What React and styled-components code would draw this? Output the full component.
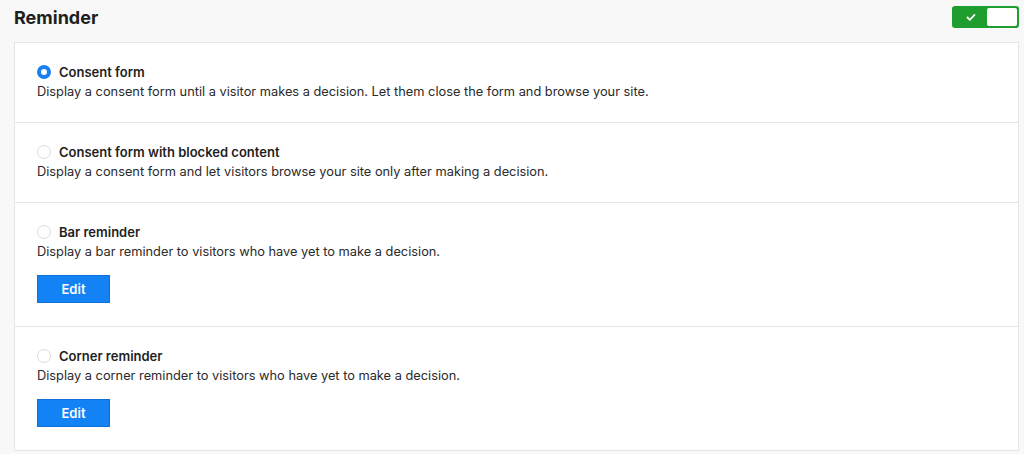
import React, { useState } from 'react'
import styled, { createGlobalStyle } from 'styled-components'

const Global = createGlobalStyle`
  body {
    margin: 0;
    background: #f8f8f8;
    font-family: Inter, "Noto Sans", sans-serif;
    color: #1e1e1e;
  }
`

const Page = styled.div`
  padding: 4px 5px 4px 14px;
`

const Header = styled.div`
  display: flex;
  align-items: center;
  justify-content: space-between;
  height: 26px;
  margin-bottom: 12px;
`

const Title = styled.h2`
  margin: 0;
  font-size: 18px;
  font-weight: 700;
  color: #1e1e1e;
`

const Toggle = styled.button`
  display: flex;
  align-items: stretch;
  width: 67px;
  height: 22px;
  padding: 2px;
  border: none;
  border-radius: 3px;
  background: ${p => (p.$on ? '#1f9e2f' : '#cccccc')};
  cursor: pointer;
  flex-direction: ${p => (p.$on ? 'row' : 'row-reverse')};
`

const ToggleMark = styled.span`
  flex: 1;
  display: flex;
  align-items: center;
  justify-content: center;
`

const Knob = styled.span`
  width: 30px;
  background: #fff;
  border-radius: 2px;
`

const Panel = styled.div`
  background: #fff;
  border: 1px solid #e6e6e6;
`

const Row = styled.label`
  display: block;
  padding: 19px 22px ${p => (p.$hasButton ? '23px' : '21px')};
  border-top: ${p => (p.$first ? 'none' : '1px solid #e6e6e6')};
  cursor: pointer;
`

const RowHead = styled.div`
  display: flex;
  align-items: center;
  gap: 8px;
  height: 20px;
`

const Radio = styled.span`
  box-sizing: border-box;
  width: 14px;
  height: 14px;
  border-radius: 50%;
  border: ${p => (p.$checked ? '4px solid #1a7ff0' : '1px solid #dedede')};
  background: #fff;
`

const OptionName = styled.span`
  font-size: 13px;
  font-weight: 600;
  color: #1e1e1e;
`

const Desc = styled.div`
  font-size: 12.8px;
  line-height: 19px;
  color: #2a2a2a;
`

const EditButton = styled.button`
  display: block;
  margin-top: 14px;
  width: 73px;
  height: 28px;
  border: 1px solid #0f6fd6;
  background: #1282f5;
  color: #fff;
  font-family: inherit;
  font-size: 13px;
  font-weight: 600;
  cursor: pointer;
`

const options = [
  {
    id: 'consent',
    name: 'Consent form',
    desc: 'Display a consent form until a visitor makes a decision. Let them close the form and browse your site.',
  },
  {
    id: 'blocked',
    name: 'Consent form with blocked content',
    desc: 'Display a consent form and let visitors browse your site only after making a decision.',
  },
  {
    id: 'bar',
    name: 'Bar reminder',
    desc: 'Display a bar reminder to visitors who have yet to make a decision.',
    edit: true,
  },
  {
    id: 'corner',
    name: 'Corner reminder',
    desc: 'Display a corner reminder to visitors who have yet to make a decision.',
    edit: true,
  },
]

export default function App() {
  const [on, setOn] = useState(true)
  const [picked, setPicked] = useState('consent')

  return (
    <Page>
      <Global />
      <Header>
        <Title>Reminder</Title>
        <Toggle $on={on} onClick={() => setOn(!on)}>
          <ToggleMark>
            {on && (
              <svg width="10" height="8" viewBox="0 0 10 8">
                <path d="M1 4l2.8 2.8L9 1.4" fill="none" stroke="#fff" strokeWidth="1.8" />
              </svg>
            )}
          </ToggleMark>
          <Knob />
        </Toggle>
      </Header>
      <Panel>
        {options.map((o, i) => (
          <Row key={o.id} $first={i === 0} $hasButton={o.edit} onClick={() => setPicked(o.id)}>
            <RowHead>
              <Radio $checked={picked === o.id} />
              <OptionName>{o.name}</OptionName>
            </RowHead>
            <Desc>{o.desc}</Desc>
            {o.edit && <EditButton>Edit</EditButton>}
          </Row>
        ))}
      </Panel>
    </Page>
  )
}
